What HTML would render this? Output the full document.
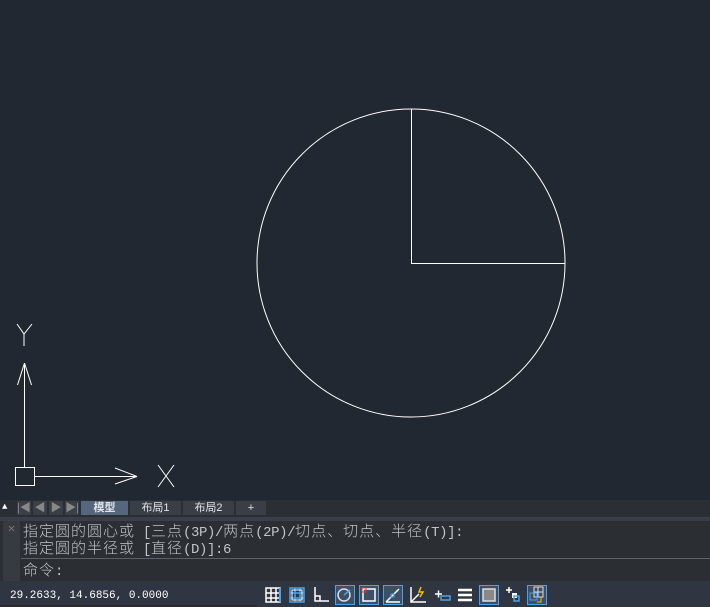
<!DOCTYPE html>
<html><head><meta charset="utf-8"><style>
body{margin:0;width:710px;height:607px;background:#222831;overflow:hidden;position:relative;font-family:"Liberation Mono","Noto Sans CJK SC",monospace}
.abs{position:absolute}
.tab{position:absolute;top:501px;height:14px;background:#3a3f47;color:#dfe3e8;font-size:11px;line-height:14px;text-align:center;font-family:"Liberation Sans","Noto Sans CJK SC",sans-serif}
.cmd{position:absolute;left:23px;font-size:15px;letter-spacing:1px;color:#c0c4ca;line-height:17px;white-space:pre;font-family:"Noto Sans CJK SC",sans-serif;font-weight:300}
.cmd b{font-weight:normal;font-family:"Liberation Mono",monospace;font-size:14px;letter-spacing:-0.4px}
</style></head><body>
<svg class="abs" style="left:0;top:0" width="710" height="500">
<circle cx="411" cy="263" r="154" fill="none" stroke="#fff" stroke-width="1"/>
<path d="M411.5 109V263.5H565" fill="none" stroke="#fff"/>
<g stroke="#fff" fill="none" stroke-width="1">
<rect x="15.5" y="467.5" width="19" height="18"/>
<path d="M24.5 467V363M24.5 363L17.5 385M24.5 363L31.5 385M35 476.5H137M137 476.5L115 468M137 476.5L115 484"/>
<path d="M17 324L24 334L32 324M24 334V346"/>
<path d="M158 465L174 487M174 465L158 487"/>
</g></svg>
<div class="abs" style="left:0;top:500px;width:710px;height:17px;background:#2a2e35"></div>
<div class="abs" style="left:2px;top:502px;font-size:9px;color:#fff">▲</div>
<div class="tab" style="left:17px;width:14px;color:#888">|◀</div>
<div class="tab" style="left:33px;width:14px;color:#888">◀</div>
<div class="tab" style="left:49px;width:14px;color:#888">▶</div>
<div class="tab" style="left:65px;width:14px;color:#888">▶|</div>
<div class="tab" style="left:81px;width:47px;background:#56667c;font-weight:bold">模型</div>
<div class="tab" style="left:130px;width:51px">布局1</div>
<div class="tab" style="left:183px;width:51px">布局2</div>
<div class="tab" style="left:236px;width:30px">+</div>
<div class="abs" style="left:0;top:517px;width:710px;height:64px;background:#2b2e33"></div>
<div class="abs" style="left:0;top:517px;width:710px;height:4px;background:#3a3f4a"></div>
<div class="abs" style="left:3px;top:521px;width:17px;height:60px;background:#363a41;color:#777;font-size:12px;text-align:center;line-height:16px">✕</div>
<div class="abs" style="left:21px;top:558px;width:689px;height:1px;background:#5b6069"></div>
<div class="cmd" style="top:522px">指定圆的圆心或<b> [</b>三点<b>(3P)/</b>两点<b>(2P)/</b>切点、切点、半径<b>(T)]:</b></div>
<div class="cmd" style="top:539px">指定圆的半径或<b> [</b>直径<b>(D)]:6</b></div>
<div class="cmd" style="top:561px">命令<b>:</b></div>
<div class="abs" style="left:0;top:581px;width:710px;height:26px;background:#303641"></div>
<div class="abs" style="left:0;top:605px;width:258px;height:2px;background:#272b31"></div>
<div class="abs" style="left:10px;top:589px;font-size:11px;color:#fff;line-height:14px">29.2633, 14.6856, 0.0000</div>
<svg class="abs" style="left:258px;top:581px" width="300" height="26" fill="none" stroke="#fff" stroke-width="1.5">
<path d="M8 7h14v14H8zM8 12h14M8 17h14M13 7v14M18 7v14"/><path d="M22 7v14" stroke="#4aa3e8" stroke-width="2"/>
<path d="M32 7h14v14H32zM32 12h14M32 17h14M37 7v14M42 7v14" stroke="#4aa3e8"/><path d="M34 9h10v10H34z" stroke="#fff" stroke-width="1"/>
<path d="M57 6v14h14M57 15h5v5"/>
<rect x="77.5" y="4.5" width="19" height="19" fill="#3d5068" stroke="#4aa3e8" stroke-width="1"/><circle cx="86" cy="14" r="6" stroke="#ddd"/><path d="M86 14l6-5" stroke="#4aa3e8"/>
<rect x="101.5" y="4.5" width="19" height="19" fill="#3d5068" stroke="#4aa3e8" stroke-width="1"/><rect x="105" y="8" width="12" height="12"/><rect x="104" y="7" width="4" height="4" stroke="#e33" stroke-width="1"/>
<rect x="125.5" y="4.5" width="19" height="19" fill="#3d5068" stroke="#4aa3e8" stroke-width="1"/><path d="M128 21L141 8M128 21h14"/><rect x="133" y="13" width="3" height="3" stroke="#4aa3e8" stroke-width="1"/>
<path d="M153 6v15h15M153 21l8-8"/><path d="M163 6l-2 5h4l-3 5" stroke="#f5c200"/>
<path d="M177 13h7M180.5 9.5v7"/><rect x="183" y="15" width="9" height="4" stroke="#4aa3e8"/>
<path d="M200 9h14M200 14h14M200 19h14" stroke-width="2.5"/>
<rect x="221.5" y="4.5" width="19" height="19" fill="#3d5068" stroke="#4aa3e8" stroke-width="1"/><rect x="225" y="8" width="12" height="12" fill="#888" stroke="#ddd"/>
<path d="M248 9h6M251 6v6"/><rect x="254" y="12" width="5" height="5" fill="#fff" stroke="none"/><rect x="256" y="15" width="5" height="5" stroke="#4aa3e8"/>
<rect x="269.5" y="4.5" width="19" height="19" fill="#3d5068" stroke="#4aa3e8" stroke-width="1"/><path d="M276 6h9v10h-9zM276 11h9M280 6v10" stroke="#ddd" stroke-width="1"/><rect x="272" y="12" width="7" height="7" stroke="#4aa3e8" stroke-width="1"/><path d="M283 16v5h-4" stroke="#f5c200" stroke-width="1"/>
</svg>
</body></html>
